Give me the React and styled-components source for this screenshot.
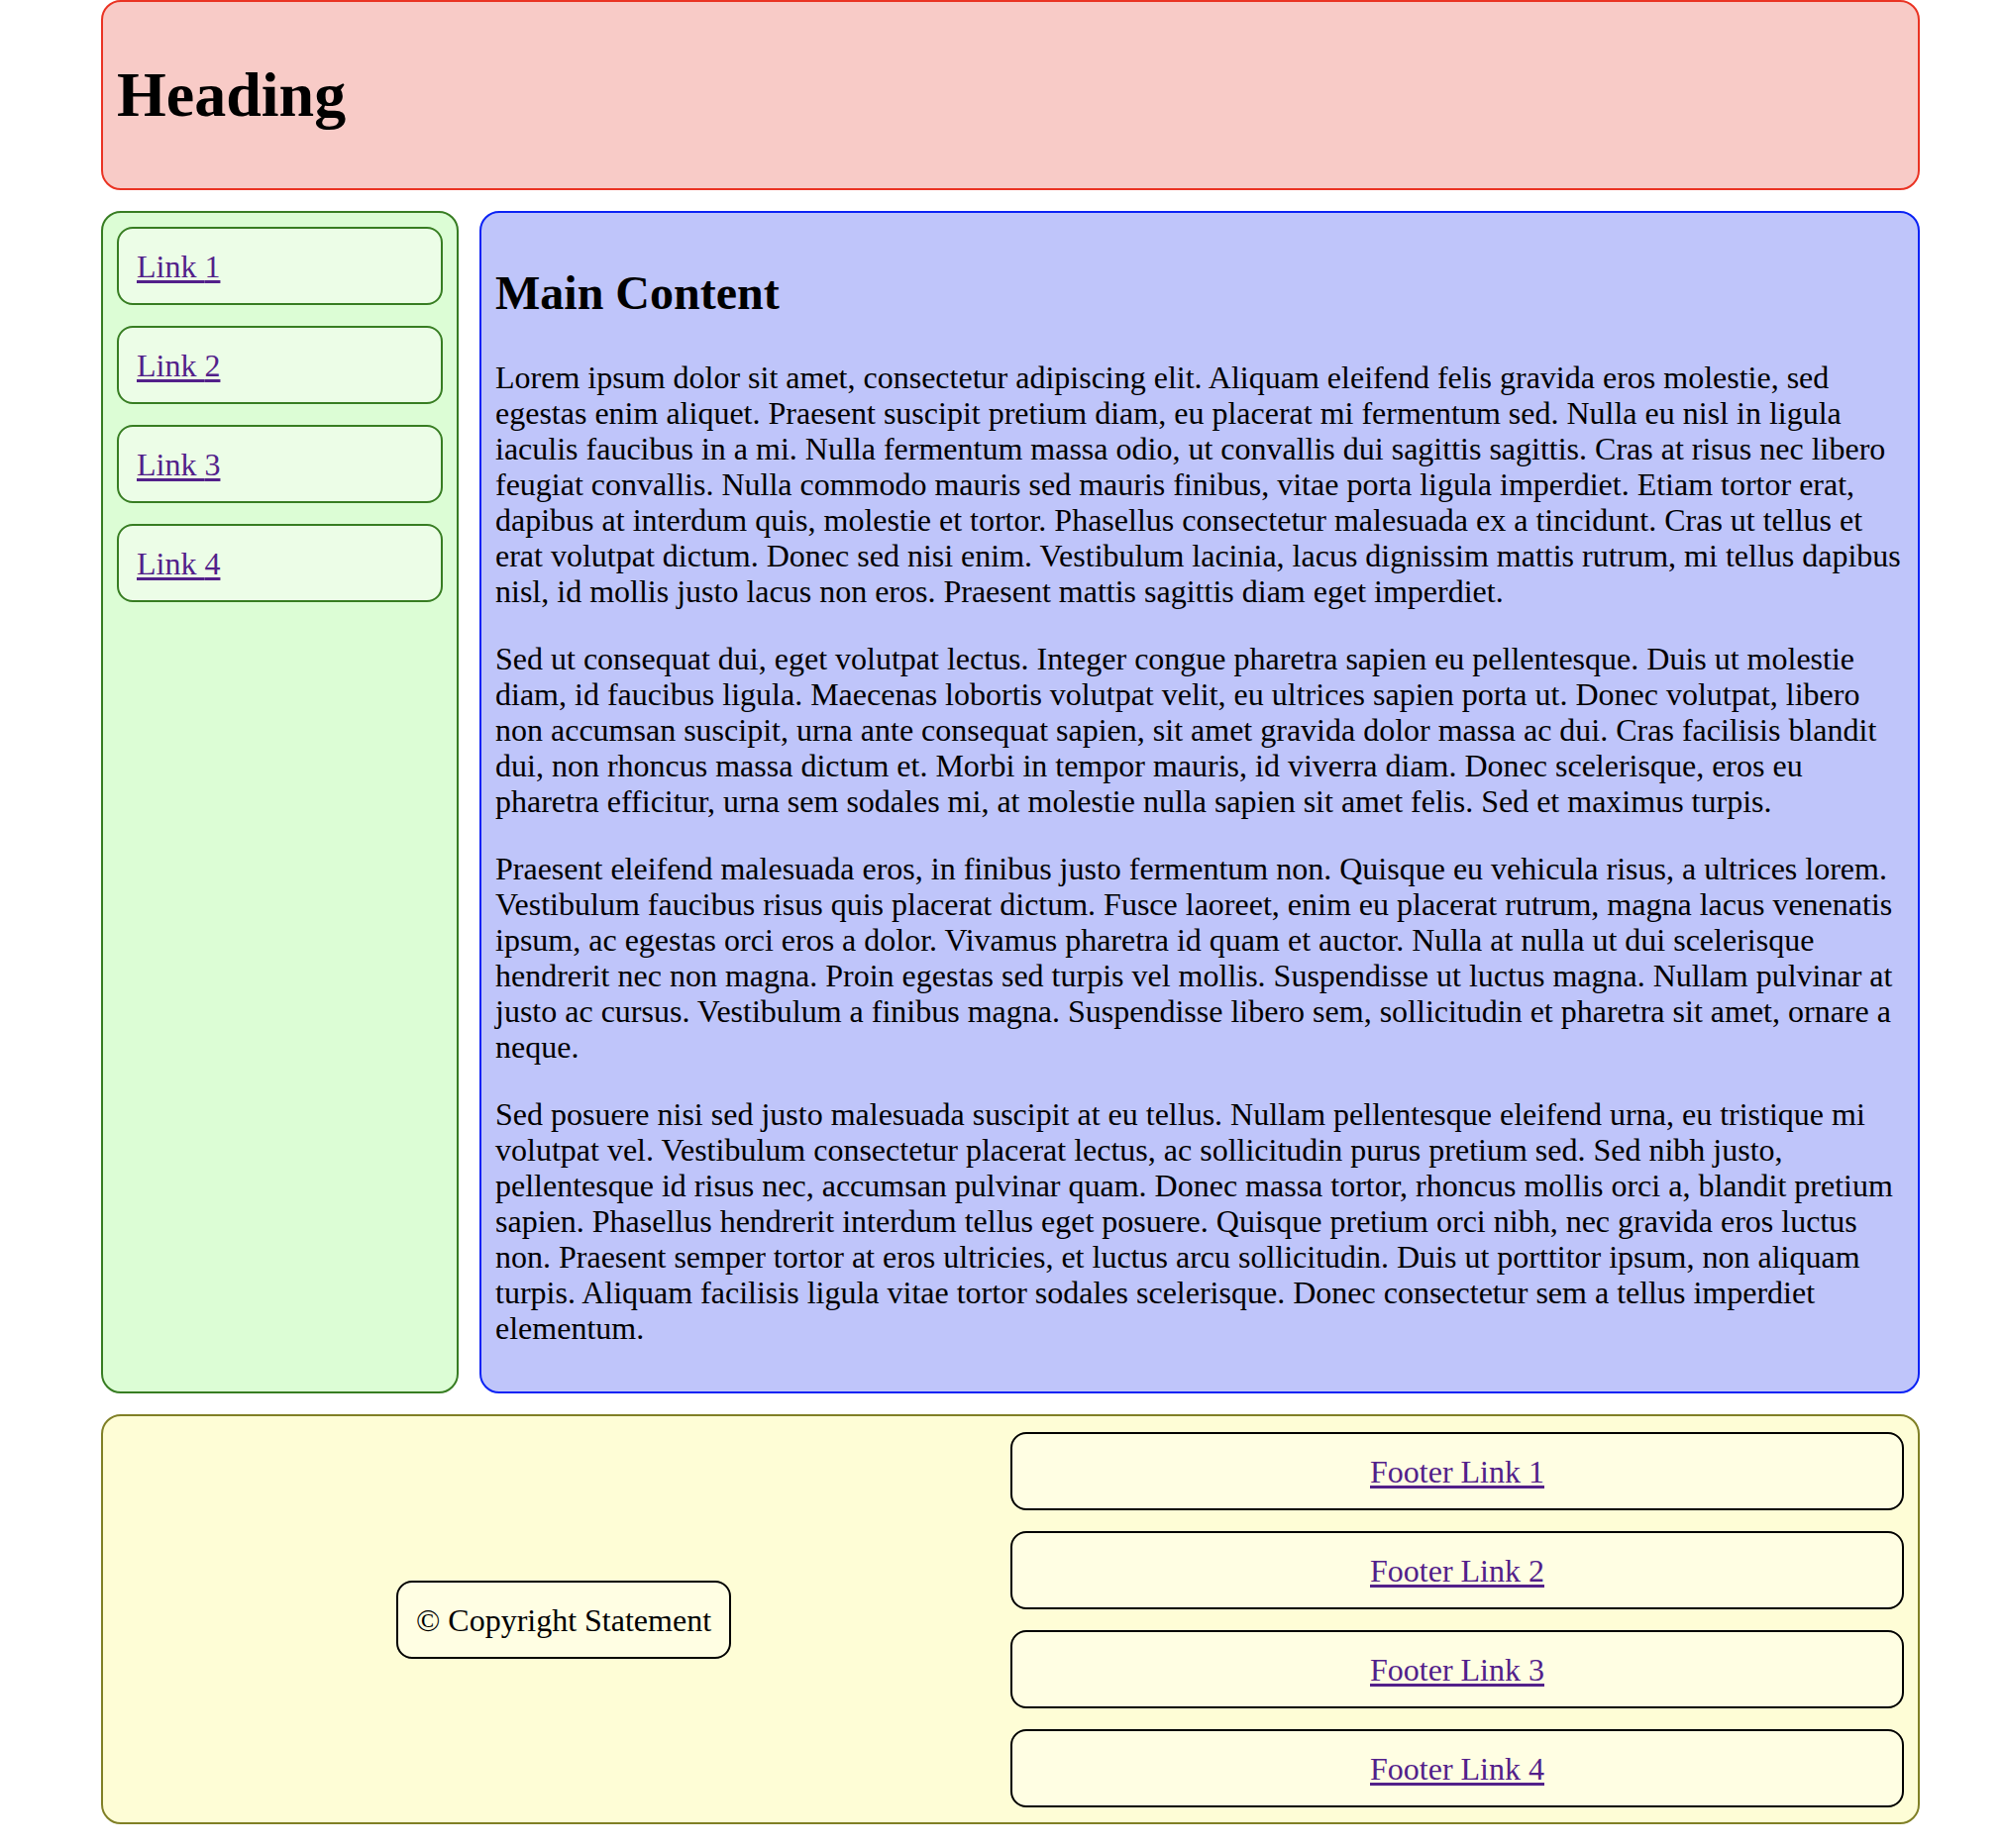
import styled, { createGlobalStyle } from "styled-components"

const GlobalStyle = createGlobalStyle`
  html, body {
    margin: 0;
    padding: 0;
    background: #ffffff;
  }
  body {
    font-family: "Liberation Serif", "Times New Roman", serif;
    font-size: 32px;
    line-height: 36px;
    color: #000;
  }
`

const Page = styled.div`
  width: 1836px;
  margin-left: 102px;
  display: grid;
  grid-template-columns: 361px 1fr;
  column-gap: 21px;
  row-gap: 21px;
`

const Box = styled.div`
  border: 2px solid ${(p) => p.$border};
  background: ${(p) => p.$bg};
  border-radius: 20px;
  padding: 14px;
`

const Header = styled(Box)`
  grid-column: 1 / -1;
`

const Heading = styled.h1`
  font-size: 64px;
  line-height: 74px;
  font-weight: bold;
  margin: 43px 0;
`

const Sidebar = styled(Box)`
  display: flex;
  flex-direction: column;
  gap: 21px;
`

const Pill = styled.div`
  border: 2px solid ${(p) => p.$border};
  background: ${(p) => p.$bg};
  border-radius: 16px;
  padding: 19.5px 18px;
  text-align: ${(p) => (p.$center ? "center" : "left")};
`

const Link = styled.a`
  color: #52208a;
  text-decoration: underline;
  text-underline-offset: 3px;
`

const Main = styled(Box)``

const SubHeading = styled.h2`
  font-size: 48px;
  line-height: 54px;
  font-weight: bold;
  margin: 40px 0;
`

const Para = styled.p`
  margin: 32px 0;
`

const Footer = styled(Box)`
  grid-column: 1 / -1;
  padding: 16px 14px 15px;
  display: grid;
  grid-template-columns: 1fr 1fr;
  align-items: center;
`

const Copyright = styled(Pill)`
  justify-self: center;
`

const FooterLinks = styled.div`
  display: flex;
  flex-direction: column;
  gap: 21px;
`

const paragraphs = [
  "Lorem ipsum dolor sit amet, consectetur adipiscing elit. Aliquam eleifend felis gravida eros molestie, sed egestas enim aliquet. Praesent suscipit pretium diam, eu placerat mi fermentum sed. Nulla eu nisl in ligula iaculis faucibus in a mi. Nulla fermentum massa odio, ut convallis dui sagittis sagittis. Cras at risus nec libero feugiat convallis. Nulla commodo mauris sed mauris finibus, vitae porta ligula imperdiet. Etiam tortor erat, dapibus at interdum quis, molestie et tortor. Phasellus consectetur malesuada ex a tincidunt. Cras ut tellus et erat volutpat dictum. Donec sed nisi enim. Vestibulum lacinia, lacus dignissim mattis rutrum, mi tellus dapibus nisl, id mollis justo lacus non eros. Praesent mattis sagittis diam eget imperdiet.",
  "Sed ut consequat dui, eget volutpat lectus. Integer congue pharetra sapien eu pellentesque. Duis ut molestie diam, id faucibus ligula. Maecenas lobortis volutpat velit, eu ultrices sapien porta ut. Donec volutpat, libero non accumsan suscipit, urna ante consequat sapien, sit amet gravida dolor massa ac dui. Cras facilisis blandit dui, non rhoncus massa dictum et. Morbi in tempor mauris, id viverra diam. Donec scelerisque, eros eu pharetra efficitur, urna sem sodales mi, at molestie nulla sapien sit amet felis. Sed et maximus turpis.",
  "Praesent eleifend malesuada eros, in finibus justo fermentum non. Quisque eu vehicula risus, a ultrices lorem. Vestibulum faucibus risus quis placerat dictum. Fusce laoreet, enim eu placerat rutrum, magna lacus venenatis ipsum, ac egestas orci eros a dolor. Vivamus pharetra id quam et auctor. Nulla at nulla ut dui scelerisque hendrerit nec non magna. Proin egestas sed turpis vel mollis. Suspendisse ut luctus magna. Nullam pulvinar at justo ac cursus. Vestibulum a finibus magna. Suspendisse libero sem, sollicitudin et pharetra sit amet, ornare a neque.",
  "Sed posuere nisi sed justo malesuada suscipit at eu tellus. Nullam pellentesque eleifend urna, eu tristique mi volutpat vel. Vestibulum consectetur placerat lectus, ac sollicitudin purus pretium sed. Sed nibh justo, pellentesque id risus nec, accumsan pulvinar quam. Donec massa tortor, rhoncus mollis orci a, blandit pretium sapien. Phasellus hendrerit interdum tellus eget posuere. Quisque pretium orci nibh, nec gravida eros luctus non. Praesent semper tortor at eros ultricies, et luctus arcu sollicitudin. Duis ut porttitor ipsum, non aliquam turpis. Aliquam facilisis ligula vitae tortor sodales scelerisque. Donec consectetur sem a tellus imperdiet elementum.",
]

const App = () => {
  return (
    <>
      <GlobalStyle />
      <Page>
        <Header $border="#ea3323" $bg="#f8cbc7">
          <Heading>Heading</Heading>
        </Header>
        <Sidebar $border="#377d22" $bg="#dcfdd5">
          {[1, 2, 3, 4].map((n) => (
            <Pill key={n} $border="#377d22" $bg="#ecfde7">
              <Link href="#">Link {n}</Link>
            </Pill>
          ))}
        </Sidebar>
        <Main $border="#0a22f5" $bg="#bfc5fa">
          <SubHeading>Main Content</SubHeading>
          {paragraphs.map((text, i) => (
            <Para key={i}>{text}</Para>
          ))}
        </Main>
        <Footer $border="#808026" $bg="#fefdd6">
          <Copyright $border="#000" $bg="#fffee3">© Copyright Statement</Copyright>
          <FooterLinks>
            {[1, 2, 3, 4].map((n) => (
              <Pill key={n} $border="#000" $bg="#fffee3" $center>
                <Link href="#">Footer Link {n}</Link>
              </Pill>
            ))}
          </FooterLinks>
        </Footer>
      </Page>
    </>
  )
}

export default App
